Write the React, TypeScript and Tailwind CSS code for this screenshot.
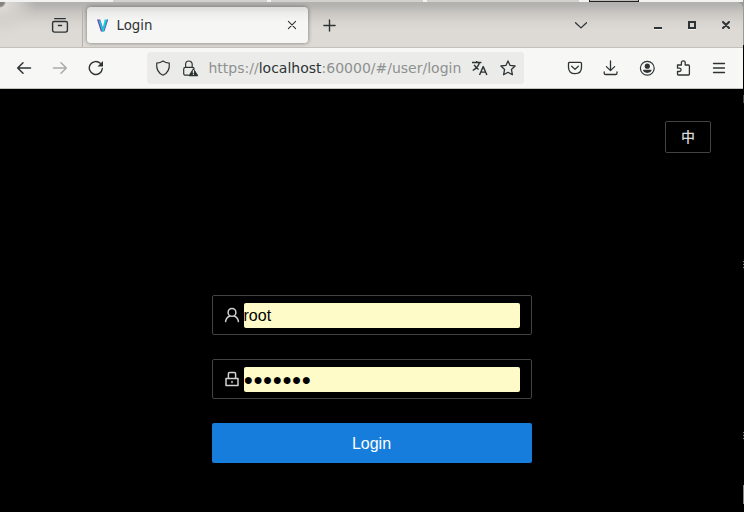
import type { ReactNode } from "react";

function Icon({ children, className = "", size = 16, color = "#2e3436", width = 1.3 }: { children: ReactNode; className?: string; size?: number; color?: string; width?: number }) {
  return (
    <svg width={size} height={size} viewBox={`0 0 ${size} ${size}`} fill="none" stroke={color} strokeWidth={width} strokeLinecap="round" strokeLinejoin="round" className={`block shrink-0 ${className}`}>
      {children}
    </svg>
  );
}

function DesktopEdge() {
  return (
    <div className="flex h-0.5 shrink-0 bg-[#f2f2f1]">
      <div className="ml-[113px] w-[154px] bg-[#d3d1ce]" />
      <div className="ml-1 w-[152px] bg-[#d3d1ce]" />
      <div className="ml-1 w-[152px] bg-[#d3d1ce]" />
      <div className="ml-[10px] w-[50px] border-x border-b border-[#222] bg-[#bdbdba]" />
    </div>
  );
}

function TitleBar() {
  return (
    <div className="flex h-[46px] shrink-0 rounded-tr-md border-b border-[#c5bfb9] bg-[linear-gradient(#b2b1ae_0px,#b4b3b0_3px,#cbc8c4_12px,#d7d3ce_20px,#dddad5_28px)]">
      <div className="flex w-[83px] shrink-0 border-r border-[#b6b2ad] bg-[radial-gradient(circle_at_0px_0px,#85837f_0px,#85837f_4px,#dddad6_6px,#d5d2ce_14px,transparent_36px)] pt-[14px]">
        <Icon className="ml-[51px]" size={18} width={1.4}>
          <path d="M3.7 2.6h10.6M3 5.5h12c.9 0 1.4.5 1.4 1.4v7.1c0 1.4-.8 2.1-2 2.1H3.6c-1.2 0-2-.7-2-2.1V6.9c0-.9.5-1.4 1.4-1.4ZM7.4 9.5h3.2" />
        </Icon>
      </div>
      <div className="mt-[5px] ml-1 flex h-9 w-[221px] shrink-0 items-center rounded bg-[linear-gradient(#dcdddb,#eeefed_7px,#f6f6f4_15px)] shadow-[0_0_4px_rgba(0,0,0,0.45)]">
        <svg width="12" height="13" viewBox="0 0 12 13" className="ml-[10px]">
          <path d="M0 0.5h3.2l3 9 .4 3H3.9Z" fill="#7441a6" />
          <path d="M1.6 1.5h1.8l2.6 9-1.2 1Z" fill="#16c9df" />
          <path d="M7.7 .5H11L7.3 12.5H4.8Z" fill="#11d4dc" />
          <path d="M10 .5h1.2L7.6 12H6.7Z" fill="#7a5bb0" />
        </svg>
        <span className="relative top-px ml-[7.5px] font-['DejaVu_Sans',sans-serif] text-[13.333px] leading-4 text-[#2e3436]">Login</span>
        <Icon className="mr-[11px] ml-auto" size={10} width={1.1}><path d="m1.4 1.4 7.2 7.2m0-7.2L1.4 8.6" /></Icon>
      </div>
      <Icon className="mt-[17px] ml-[15px]" size={13} width={1.4}><path d="M6.5.9v11.2M.9 6.5h11.2" /></Icon>
      <Icon className="mt-[18px] ml-[239px]" size={12} width={1.3}><path d="m.5 2.7 5.5 5.2 5.5-5.2" /></Icon>
      <div className="mt-[25px] ml-[67px] h-[3px] w-2 shrink-0 border-b border-[#f4f3f0] bg-[#2e3436]" />
      <div className="mt-[19px] ml-[26px] size-2 shrink-0 border-2 border-[#2e3436] shadow-[0_1px_0_#f4f3f0]" />
      <Icon className="mt-[19px] ml-[26px]" size={8} width={2}><path d="m1 1 6 6m0-6L1 7" /></Icon>
    </div>
  );
}

function AddressBar() {
  return (
    <div className="flex h-8 w-[377px] shrink-0 items-center rounded bg-[#ebebe9]">
      <Icon className="ml-2" size={16} width={1.2}><path d="M8 1c1.8 1.3 3.8 2 6.3 2.2.5 5.7-1.4 9.8-6.3 12C3.1 13 1.2 8.9 1.7 3.2 4.2 3 6.2 2.3 8 1Z" /></Icon>
      <Icon className="ml-[11px]" size={17} width={1.2}>
        <path d="M6.4 15.2H3.5c-1 0-1.8-.7-1.8-1.8V9.2c0-1 .7-1.8 1.8-1.8h7c.8 0 1.4.4 1.6 1M3.6 7.2V4.3a3.3 3.3 0 0 1 6.6 0v2.9" />
        <path d="m11.4 9 4.1 6.6H7.3Z" fill="#2e3436" />
        <path d="M11.4 10.6v2.2m0 1.6v.1" stroke="#ebebe9" strokeWidth="1.2" />
      </Icon>
      <span className="ml-[9.5px] w-[254.5px] shrink-0 font-['DejaVu_Sans',sans-serif] text-[14px] leading-5 whitespace-nowrap text-[#8e9190]">
        https://<span className="text-[#2e3436]">localhost</span>:60000/#/user/login
      </span>
      <Icon className="ml-[8px]" size={17} width={1.4}>
        <path d="M1 2.5h9.4M5.7.9v1.6M8.4 2.7C7.5 6 5 8.6 1.7 10.5M3.2 4.8C4.4 7 5.8 8.4 7.6 9.5M8.5 15l3.7-8.4 3.7 8.4m-6.2-2.9h5" strokeLinecap="butt" />
      </Icon>
      <Icon className="ml-[12px]" size={16} width={1.3}><path d="m8 .9 2.1 4.5 5 .6-3.7 3.4 1 5.3L8 12.3l-4.4 2.4 1-5.3L.9 6l5-.6Z" /></Icon>
    </div>
  );
}

function Toolbar() {
  return (
    <div className="flex h-[41px] shrink-0 items-center border-b border-[#c5c1bb] bg-[#f7f7f5]">
      <Icon className="ml-4" width={1.5}><path d="M14.5 8H1.8M7 2.8 1.7 8 7 13.2" /></Icon>
      <Icon className="ml-5" color="#aaaaa9" width={1.5}><path d="M1.5 8h12.7M9 2.8 14.3 8 9 13.2" /></Icon>
      <Icon className="ml-5" width={1.4}><path d="M14.3 8.5a6.5 6.5 0 1 1-2-5.2" /><path d="M15 1v5.5H9.5Z" fill="#2e3436" stroke="none" /></Icon>
      <div className="ml-[43px]"><AddressBar /></div>
      <Icon className="ml-[43px]"><path d="M2.5 2.3h10.8c.8 0 1.2.5 1.2 1.3v3.7c0 4-2.4 6.4-6.5 6.4S1.5 11.3 1.5 7.3V3.6c0-.8.3-1.3 1-1.3ZM4.7 6.3 8 9.4l3.3-3.1" /></Icon>
      <Icon className="ml-5"><path d="M7.5.9v9.6M3.4 6.6l4.1 4 4.1-4M1.2 12v.9c0 1 .6 1.6 1.6 1.6h9.6c1 0 1.6-.6 1.6-1.6V12" /></Icon>
      <Icon className="ml-5" width={1.2}><circle cx="8.3" cy="8.3" r="6.9" /><circle cx="8.3" cy="6.2" r="2.6" fill="#2e3436" stroke="none" /><path d="M4 9.8h8.6c0 1.8-1.8 3.1-4.3 3.1S4 11.6 4 9.8Z" fill="#2e3436" stroke="none" /></Icon>
      <Icon className="ml-5"><path d="M2.5 5h3.9V2.8a1.9 1.9 0 0 1 3.8 0V5h3.2c.6 0 1 .4 1 1v8.1c0 .5-.3.9-.9.9H3.4c-.5 0-.9-.3-.9-.9v-2.6h1.9a1.7 1.7 0 0 0 0-3.4H2.5Z" /></Icon>
      <Icon className="ml-5" width={1.3}><path d="M2.5 3.5h11m-11 4.5h11m-11 4.5h11" /></Icon>
    </div>
  );
}

function Field({ icon, value }: { icon: ReactNode; value: string }) {
  return (
    <div className="flex h-10 items-start rounded-[2px] border border-[#434343] pt-[7px] pr-[11px] pl-[11px]">
      <div className="mt-1 mr-1 size-4">{icon}</div>
      <div className="h-[25px] flex-1 overflow-hidden rounded-[2px] bg-[#fffbc8] font-['Liberation_Sans',Arial,sans-serif] text-base leading-[25px] whitespace-nowrap text-black">{value}</div>
    </div>
  );
}

function LoginPage() {
  return (
    <main className="flex-1 bg-black">
      <div className="flex justify-end pt-8 pr-8">
        <button className="h-8 w-[46px] rounded-[2px] border border-[#434343] pb-0.5 font-['Noto_Sans_CJK_SC',sans-serif] text-sm leading-[28px] font-medium text-[#d9d9d9]">中</button>
      </div>
      <form className="mx-auto mt-[142px] flex w-80 flex-col gap-6">
        <Field value="root" icon={<Icon color="#d0d0d0" width={1.5}><circle cx="8" cy="5.4" r="3.9" /><path d="M1.6 14.6c.3-2.7 1.9-4.6 4.2-5.6m4.4 0c2.3 1 3.9 2.9 4.2 5.6" /></Icon>} />
        <Field value="●●●●●●●" icon={<Icon color="#d0d0d0" width={1.5}><path d="M2 7.5h12v7H2ZM4.4 7.4V2.7c0-.8.5-1.2 1.2-1.2h4.8c.7 0 1.2.4 1.2 1.2v4.7M8 10.4v1.2" /></Icon>} />
        <button type="button" className="h-10 rounded-[2px] bg-[#177ddc] pt-px font-['Liberation_Sans',Arial,sans-serif] text-base leading-[39px] text-white">Login</button>
      </form>
    </main>
  );
}

export default function App() {
  return (
    <div className="flex h-[512px] w-[744px] overflow-hidden bg-black">
      <div className="flex w-[743px] shrink-0 flex-col bg-[#999996]">
        <DesktopEdge />
        <TitleBar />
        <Toolbar />
        <LoginPage />
      </div>
      <div className="flex w-px shrink-0 flex-col bg-black">
        <div className="h-[45px] shrink-0 bg-[#999996]" />
        <div className="mt-[50px] h-2 shrink-0 bg-[#454545]" />
        <div className="mt-[158px] h-2 shrink-0 bg-[repeating-linear-gradient(#777_0px,#777_1px,#111_1px,#111_3px)]" />
        <div className="mt-[163px] h-2 shrink-0 bg-[repeating-linear-gradient(#777_0px,#777_1px,#111_1px,#111_3px)]" />
        <div className="mt-[45px] h-[19px] shrink-0 bg-[#888]" />
      </div>
    </div>
  );
}
